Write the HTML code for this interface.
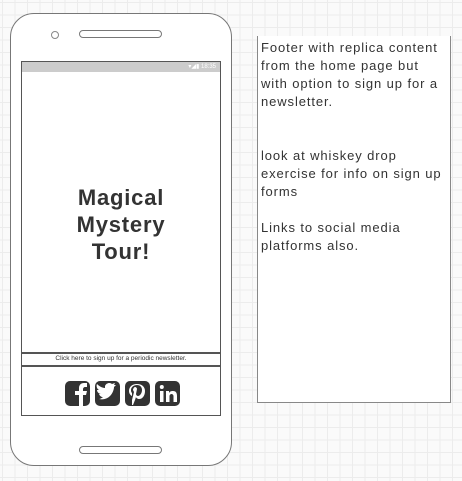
<!DOCTYPE html><html><head><style>
body{margin:0;width:462px;height:481px;overflow:hidden;background:#fafafa;
background-image:linear-gradient(#ececec 1px,transparent 1px),linear-gradient(90deg,#ececec 1px,transparent 1px);background-size:12.5px 12.5px;background-position:2px 2px;font-family:"Liberation Sans",sans-serif;position:relative}
.a{position:absolute;box-sizing:border-box}
</style></head><body>
<div class="a" style="left:10px;top:13px;width:222px;height:453px;border:1.5px solid #777;border-radius:24px;background:#fff"></div>
<div class="a" style="left:51px;top:31px;width:8px;height:8px;border:1.5px solid #888;border-radius:50%"></div>
<div class="a" style="left:79px;top:30px;width:83px;height:8px;border:1.5px solid #777;border-radius:5px"></div>
<div class="a" style="left:79px;top:446px;width:83px;height:8px;border:1.5px solid #777;border-radius:5px"></div>
<div class="a" style="left:21px;top:61px;width:200px;height:355px;border:1.5px solid #555;background:#fff"></div>
<div class="a" style="left:22px;top:62px;width:198px;height:10px;background:#ccc;color:#fff;font-size:6px;text-align:right;padding-right:4px;line-height:10px">▾◢▮ 18:35</div>
<div class="a" style="left:22px;top:184px;width:198px;text-align:center;font-size:22px;font-weight:bold;color:#333;line-height:27px;letter-spacing:0.8px">Magical<br>Mystery<br>Tour!</div>
<div class="a" style="left:22px;top:352px;width:198px;height:1.5px;background:#555"></div>
<div class="a" style="left:22px;top:365px;width:198px;height:1.5px;background:#555"></div>
<div class="a" style="left:22px;top:353px;width:198px;font-size:6.5px;text-align:center;line-height:11px;color:#333;white-space:nowrap">Click here to sign up for a periodic newsletter.</div>
<svg class="a" style="left:64px;top:380px" width="118" height="27" viewBox="0 0 118 27">
<g fill="#333"><rect x="1" y="1" width="25" height="25" rx="5"/><rect x="31" y="1" width="25" height="25" rx="5"/><rect x="61" y="1" width="25" height="25" rx="5"/><rect x="91" y="1" width="25" height="25" rx="5"/></g>
<path d="M15 26V15h-4v-4h4V8c0-3 2-5 5-5h3v4h-2c-1 0-2 1-2 2v2h4l-1 4h-3v11z" fill="#fff"/>
<path d="M35 19c4 1 8 0 11-3 3-3 4-7 4-9l2-2-2 0 1-2-3 1c-2-2-6-1-7 2v2c-3 0-6-2-8-4-1 2 0 5 2 6h-2c0 2 2 4 4 4h-2c1 2 2 3 4 3-1 1-3 2-4 2z" fill="#fff"/>
<path d="M73 4c-5 0-8 3-8 7 0 2 1 4 3 5 0-1 0-2 0-3-1-1-1-2-1-3 0-3 3-5 6-5 3 0 5 2 5 5 0 3-2 6-4 6-1 0-2-1-2-2l1-5c0-1-1-2-2-2-1 0-2 2-2 3l1 2-2 8 0 5h1l2-5 1-3c0 1 2 2 3 2 4 0 6-4 6-8 0-4-3-7-8-7z" fill="#fff"/>
<g fill="#fff"><rect x="96" y="11" width="3.5" height="11"/><circle cx="97.8" cy="7" r="2"/><path d="M102 11h3v2c1-2 3-2 4-2 3 0 4 2 4 5v6h-3.5v-6c0-1-1-2-2-2s-2 1-2 2v6H102z"/></g>
</svg>
<div class="a" style="left:257px;top:36px;width:194px;height:367px;border:1.5px solid #888;border-top:none;background:#fff"></div>
<div class="a" style="left:261px;top:39px;width:190px;font-size:13px;line-height:18px;color:#333;white-space:nowrap;letter-spacing:0.9px">Footer with replica content<br>from the home page but<br>with option to sign up for a<br>newsletter.<br><br><br>look at whiskey drop<br>exercise for info on sign up<br>forms<br><br>Links to social media<br>platforms also.</div>
</body></html>
